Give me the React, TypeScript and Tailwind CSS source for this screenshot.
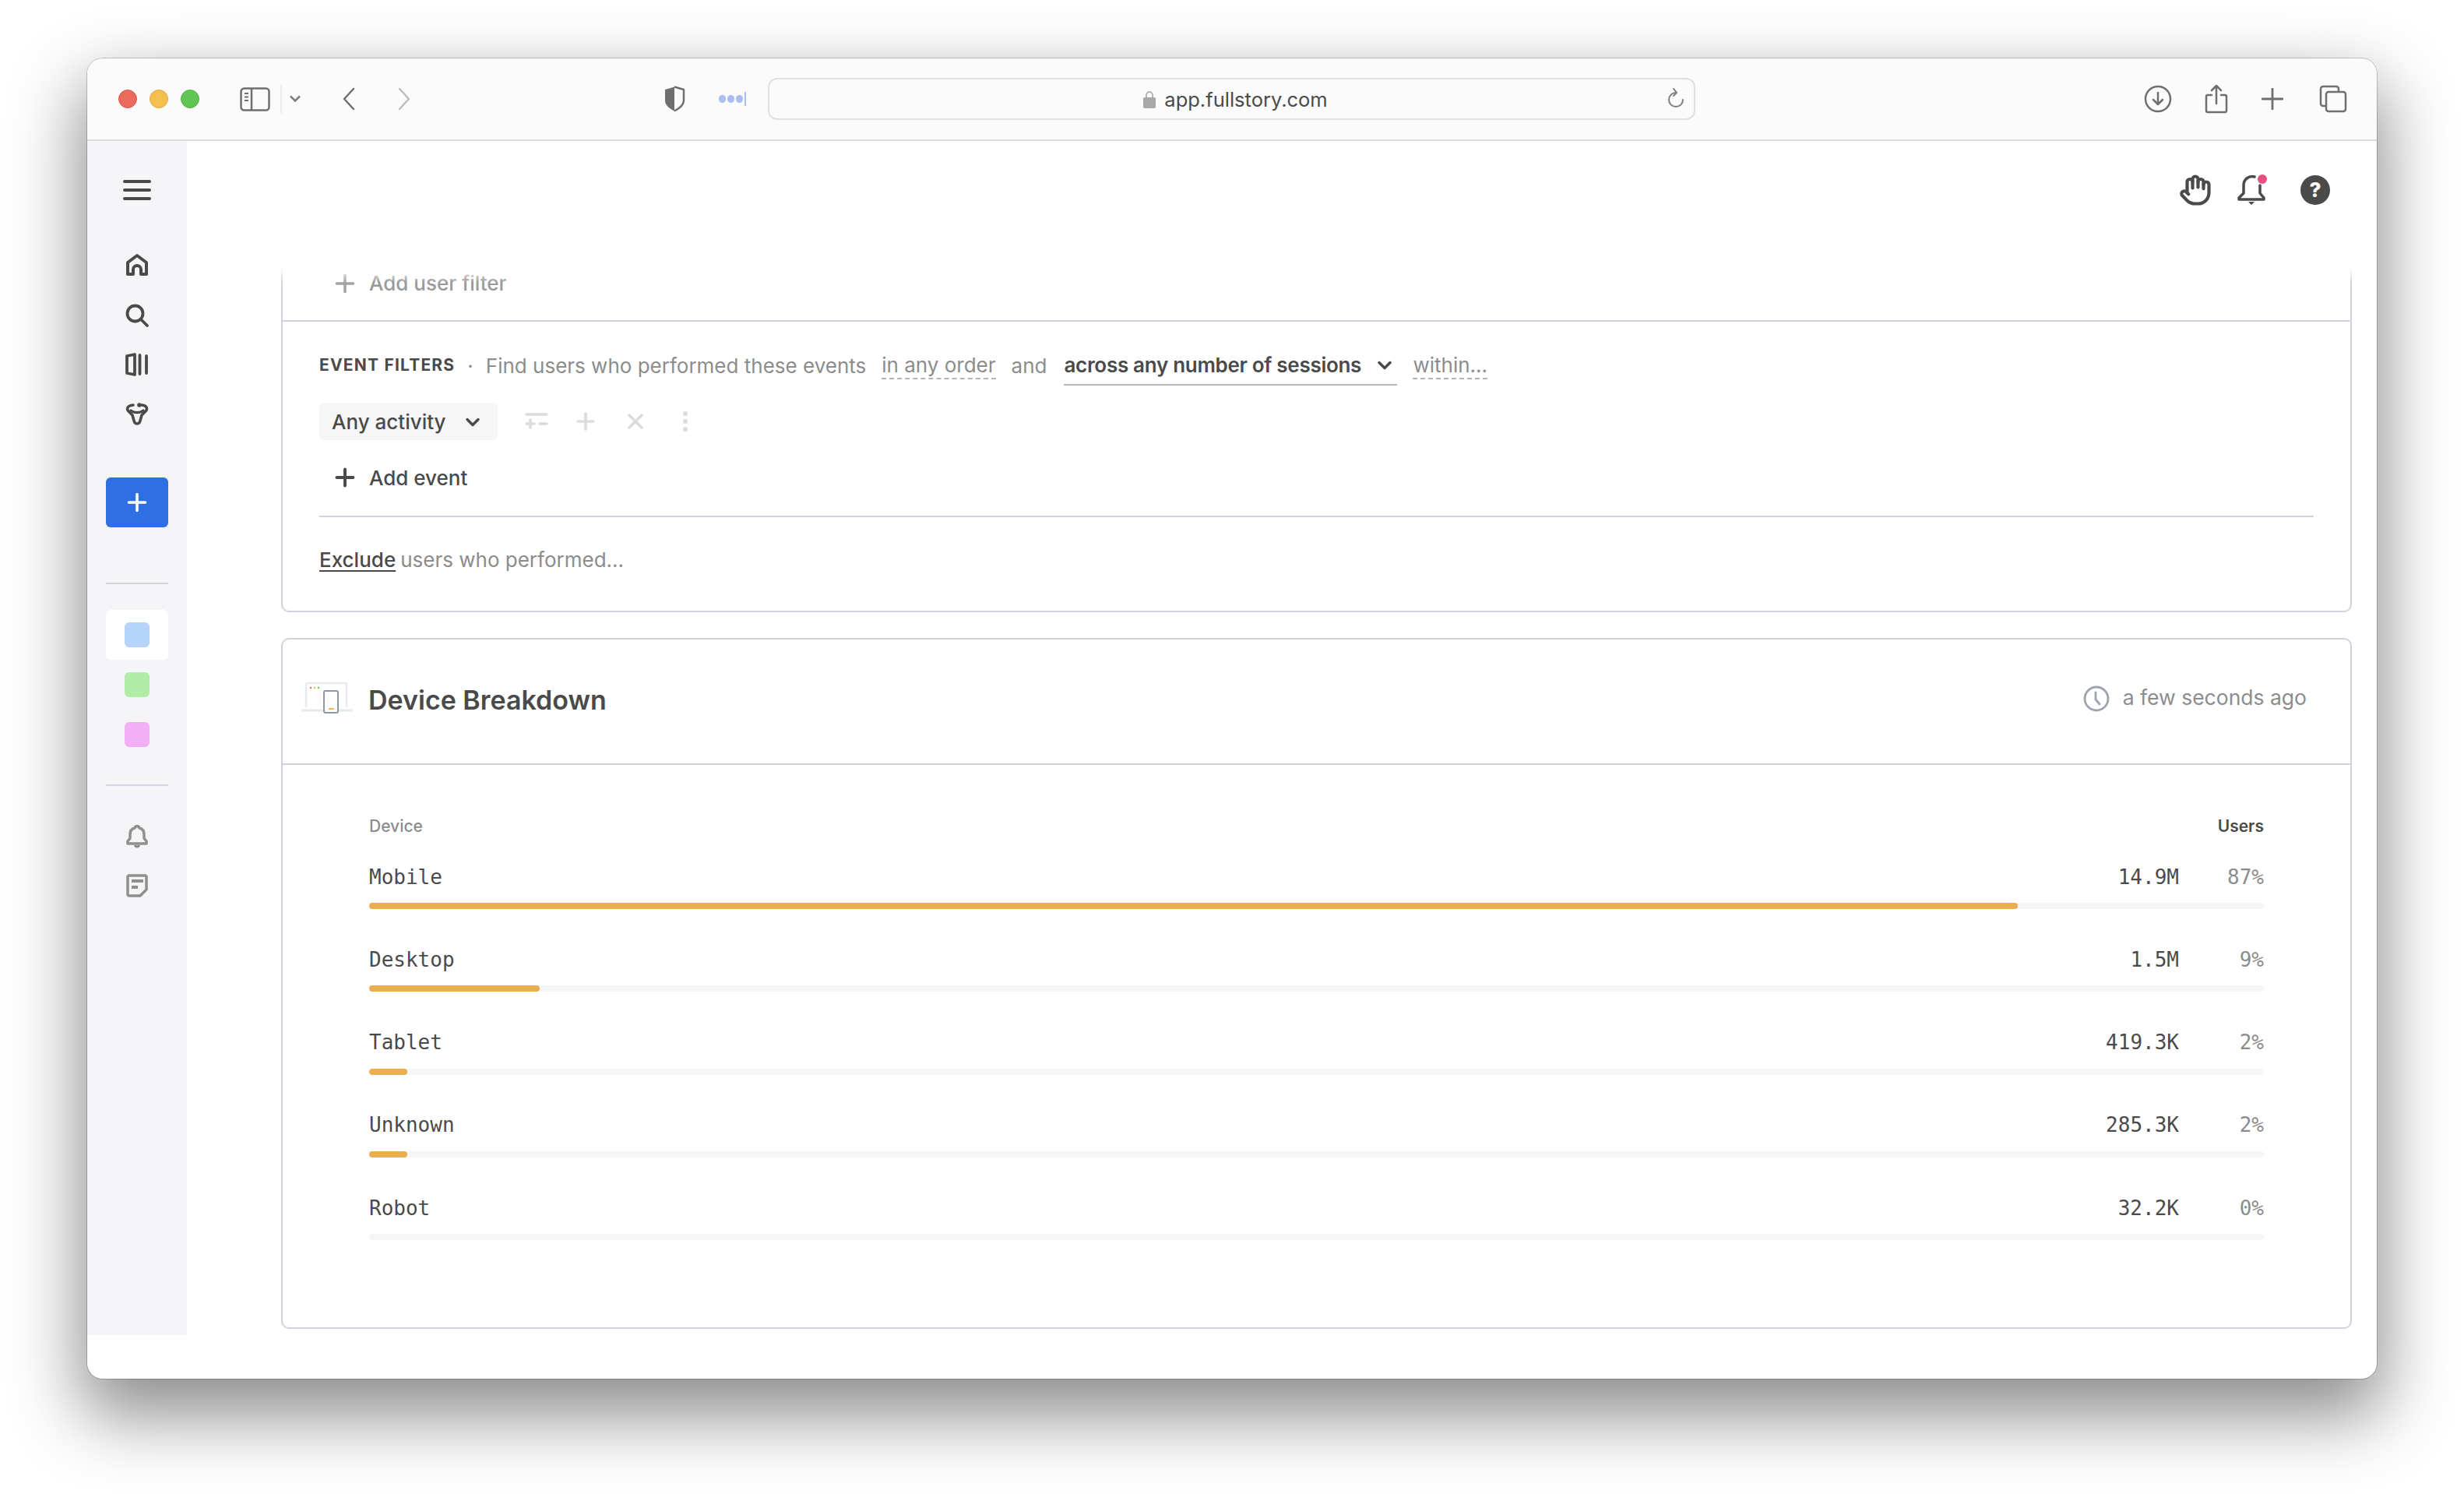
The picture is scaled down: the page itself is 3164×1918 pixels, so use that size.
import { ChevronDown, Hand, Plus, X } from "lucide-react";

const rows = [
  { name: "Mobile", value: "14.9M", pct: "87%", width: "87%" },
  { name: "Desktop", value: "1.5M", pct: "9%", width: "9%" },
  { name: "Tablet", value: "419.3K", pct: "2%", width: "2%" },
  { name: "Unknown", value: "285.3K", pct: "2%", width: "2%" },
  { name: "Robot", value: "32.2K", pct: "0%", width: "0%" },
];

const TitleBar = () => (
  <div className="h-[106px] shrink-0 bg-[#fbfbfb] border-b-2 border-[#dcdcdc] flex items-center pl-[40px] font-['Inter',sans-serif]">
    <div className="w-6 h-6 rounded-full bg-[#ec6a5e] border border-[#d85a4f]" />
    <div className="w-6 h-6 rounded-full bg-[#f4bf4f] border border-[#dea73f] ml-4" />
    <div className="w-6 h-6 rounded-full bg-[#61c554] border border-[#52b145] ml-4" />
    <svg className="ml-[52px]" width="39" height="31" viewBox="0 0 39 31" fill="none" stroke="#6f6f6f" strokeWidth="2.5">
      <rect x="1.5" y="1.5" width="36" height="28" rx="4" />
      <path d="M15 2v27" />
      <path d="M6 8h5M6 12.5h5M6 17h5" strokeWidth="2" />
    </svg>
    <div className="w-[2px] h-9 bg-[#ebebeb] ml-[13px]" />
    <svg className="ml-[10px]" width="14" height="10" viewBox="0 0 14 10" fill="none" stroke="#7d7d7d" strokeWidth="2.5">
      <path d="M1 1.5l6 6 6-6" />
    </svg>
    <svg className="ml-[54px]" width="16" height="30" viewBox="0 0 16 30" fill="none" stroke="#6f6f6f" strokeWidth="2.5" strokeLinecap="round" strokeLinejoin="round">
      <path d="M14 2L2 15l12 13" />
    </svg>
    <svg className="ml-[55px]" width="16" height="30" viewBox="0 0 16 30" fill="none" stroke="#bdbdbd" strokeWidth="2.5" strokeLinecap="round" strokeLinejoin="round">
      <path d="M2 2l12 13L2 28" />
    </svg>
    <svg className="ml-[325px]" width="28" height="34" viewBox="0 0 28 34" fill="none">
      <path d="M14 1.5L2 5v14c0 6 5 10 12 13.5V1.5z" fill="#6f6f6f" />
      <path d="M14 1.5L26 5v14c0 6-5 10-12 13.5" stroke="#6f6f6f" strokeWidth="2.5" strokeLinejoin="round" />
    </svg>
    <div className="ml-[43px] w-[37px] flex items-center gap-[2px]">
      <div className="w-[9px] h-[10px] rounded-full bg-[#a9bdf0]" />
      <div className="w-[9px] h-[10px] rounded-full bg-[#a9bdf0]" />
      <div className="w-[9px] h-[10px] rounded-full bg-[#a9bdf0]" />
      <div className="w-[2px] h-[18px] bg-[#a9bdf0]" />
    </div>
    <div className="ml-[26px] w-[1191px] h-[54px] border-2 border-[#e0e0e0] rounded-[12px] flex items-center justify-center relative">
      <svg className="mr-[11px] mb-[1px] ml-[10px]" width="16" height="24" viewBox="0 0 16 24" fill="none">
        <path d="M4 11V7a4 4 0 018 0v4" stroke="#b4b4b4" strokeWidth="2" />
        <rect x="0" y="10" width="16" height="14" rx="2" fill="#a8a8a8" />
      </svg>
      <span className="text-[25.5px] leading-none text-[#4a4a4a] pt-[2px]">app.fullstory.com</span>
      <svg className="absolute right-[11px] top-[11px]" width="24" height="28" viewBox="0 0 24 28" fill="none" stroke="#7d7d7d" strokeWidth="2" strokeLinecap="round">
        <path d="M12 6a9 9 0 109 9" />
        <path d="M9 1l4 5-4 4" />
      </svg>
    </div>
    <svg className="ml-[576px]" width="36" height="36" viewBox="0 0 36 36" fill="none" stroke="#6f6f6f" strokeWidth="2.5" strokeLinecap="round" strokeLinejoin="round">
      <circle cx="18" cy="18" r="16" />
      <path d="M18 10v15M12 19l6 6 6-6" />
    </svg>
    <svg className="ml-[42px]" width="30" height="38" viewBox="0 0 30 38" fill="none" stroke="#6f6f6f" strokeWidth="2.5" strokeLinecap="round" strokeLinejoin="round">
      <path d="M9 14H4a2 2 0 00-2 2v18a2 2 0 002 2h22a2 2 0 002-2V16a2 2 0 00-2-2h-5" />
      <path d="M15 25V2M9 8l6-6 6 6" />
    </svg>
    <svg className="ml-[43px]" width="28" height="28" viewBox="0 0 28 28" fill="none" stroke="#6f6f6f" strokeWidth="2.8" strokeLinecap="round">
      <path d="M14 1v26M1 14h26" />
    </svg>
    <svg className="ml-[46px]" width="36" height="36" viewBox="0 0 36 36" fill="none" stroke="#6f6f6f" strokeWidth="2.5" strokeLinejoin="round">
      <path d="M8 27H5a3 3 0 01-3-3V5a3 3 0 013-3h17a3 3 0 013 3v4" />
      <rect x="9" y="9" width="25" height="25" rx="3" />
    </svg>
  </div>
);

const Sidebar = () => (
  <div className="w-[128px] h-[1533px] shrink-0 bg-[#f5f5f8] flex flex-col items-center pt-[50px]">
    <div className="w-9 flex flex-col gap-[7px]">
      <div className="h-[4px] rounded-full bg-[#4a4a4a]" />
      <div className="h-[4px] rounded-full bg-[#4a4a4a]" />
      <div className="h-[4px] rounded-full bg-[#4a4a4a]" />
    </div>
    <svg className="mt-[68px]" width="30" height="30" viewBox="0 0 30 30" fill="none" stroke="#4a4a4a" strokeWidth="4" strokeLinejoin="round">
      <path d="M3 12L15 3l12 9v15h-7v-6a5 5 0 00-10 0v6H3z" />
    </svg>
    <svg className="mt-[35px]" width="30" height="30" viewBox="0 0 30 30" fill="none" stroke="#4a4a4a" strokeWidth="3.8" strokeLinecap="round">
      <circle cx="12.500" cy="12.500" r="10" />
      <path d="M20 20l8 8" />
    </svg>
    <svg className="mt-[33px]" width="30" height="30" viewBox="0 0 30 30" fill="none" stroke="#4a4a4a" strokeWidth="3.8" strokeLinecap="round" strokeLinejoin="round">
      <path d="M2 4l10-2v26L2 26z" />
      <path d="M18.500 3v24M27 4v22" />
    </svg>
    <svg className="mt-[34px]" width="30" height="30" viewBox="0 0 30 30" fill="none">
      <path d="M10 3C5 3.500 2.500 5 2.500 8c0 3 5 5.500 6.500 8l2 7c.5 2.500 1.500 4 4 4s3.500-1.500 4-4l2-7c1.500-2.500 6.500-5 6.500-8 0-3-2.500-4.500-6-5" stroke="#4a4a4a" strokeWidth="3.6" strokeLinecap="round" strokeLinejoin="round" />
      <path d="M7 10c4 3.500 12 3.500 16 0" stroke="#4a4a4a" strokeWidth="3.2" strokeLinecap="round" />
      <circle cx="18" cy="3" r="2.800" fill="#4a4a4a" />
    </svg>
    <button className="mt-[66px] w-20 h-16 rounded-[6px] bg-[#2f6fe4] flex items-center justify-center">
      <Plus size={36} color="#ffffff" strokeWidth={2.4} />
    </button>
    <div className="mt-[71px] w-20 h-[2px] bg-[#d2d1df]" />
    <div className="mt-[33px] w-20 h-16 rounded-[6px] bg-white flex items-center justify-center">
      <div className="w-8 h-8 rounded-[6px] bg-[#b6d3fb]" />
    </div>
    <div className="mt-4 w-8 h-8 rounded-[6px] bg-[#b2eda8]" />
    <div className="mt-8 w-8 h-8 rounded-[6px] bg-[#f3aef8]" />
    <div className="mt-[48px] w-20 h-[2px] bg-[#d2d1df]" />
    <svg className="mt-[50px]" width="28" height="30" viewBox="0 0 28 30" fill="none">
      <path d="M14 1.500c1.500 0 2.500 1 2.700 2.300C21 5 23 8 23 12v5l3 4v3H2v-3l3-4v-5c0-4 2-7 6.300-8.200C11.500 2.500 12.500 1.500 14 1.500z" stroke="#8f8f8f" strokeWidth="3.500" strokeLinejoin="round" />
      <path d="M10 26h8c0 2-2 3.500-4 3.500S10 28 10 26z" fill="#8f8f8f" />
    </svg>
    <svg className="mt-[33px]" width="28" height="30" viewBox="0 0 28 30" fill="none">
      <path d="M2 4a2 2 0 012-2h20a2 2 0 012 2v16l-8 8H4a2 2 0 01-2-2z" stroke="#8f8f8f" strokeWidth="3.500" strokeLinejoin="round" />
      <path d="M7 9h15M7 17h8" stroke="#8f8f8f" strokeWidth="4" />
    </svg>
  </div>
);

const FiltersCard = () => (
  <div className="relative h-[443px] border-x-2 border-b-2 border-[#d2d1df] rounded-b-[10px] font-['Inter',sans-serif] text-[26px]">
    <div className="absolute -left-[2px] -right-[2px] top-0 h-5 bg-gradient-to-b from-white to-transparent" />
    <div className="h-[70px] border-b-2 border-[#d2d1df] flex items-start pl-[62px] pt-[3px] text-[#999999] font-medium">
      <Plus size={36} color="#a4a4a4" strokeWidth={2.4} />
      <span className="ml-[13px] leading-[36px]">Add user filter</span>
    </div>
    <div className="px-[47px]">
      <div className="mt-[40px] h-8 flex items-center text-[#8c8c8c] whitespace-nowrap">
        <span className="text-[21px] font-bold tracking-[1.2px] text-[#4a4a4a]">EVENT FILTERS</span>
        <span className="ml-[16px] text-[#8c8c8c]">·</span>
        <span className="ml-[16px]">Find users who performed these events</span>
        <span className="ml-[20px] h-[36px] leading-[36px] border-b-2 border-dashed border-[#b5b5b5]">in any order</span>
        <span className="ml-[20px]">and</span>
        <span className="ml-[22px] w-[428px] h-[42px] flex items-center border-b-2 border-[#b5b5b5] mt-[9px] pb-[8px] text-[#4a4a4a] font-semibold tracking-[-0.3px]">
          across any number of sessions
          <ChevronDown className="ml-auto mr-[2px]" size={28} color="#4a4a4a" strokeWidth={3} />
        </span>
        <span className="ml-[20px] h-[36px] leading-[36px] border-b-2 border-dashed border-[#b5b5b5]">within...</span>
      </div>
      <div className="mt-[32px] flex items-center">
        <div className="w-[229px] h-12 rounded-[6px] bg-[#f6f6f6] flex items-center pl-4 pt-[1px] text-[#4a4a4a] font-medium">
          Any activity
          <ChevronDown className="ml-auto mr-[18px]" size={28} color="#4a4a4a" strokeWidth={3} />
        </div>
        <svg className="ml-[35px]" width="30" height="30" viewBox="0 0 30 30" fill="none" stroke="#dcdcdc" strokeWidth="3.500" strokeLinecap="round">
          <path d="M2 6h26M2 18h10M7 13v10M19 18h9" />
        </svg>
        <Plus className="ml-[31px]" size={34} color="#dcdcdc" strokeWidth={2.6} />
        <X className="ml-[31px]" size={32} color="#dcdcdc" strokeWidth={2.8} />
        <div className="ml-[45px] flex flex-col gap-[4px]">
          <div className="w-[6px] h-[6px] rounded-full bg-[#dcdcdc]" />
          <div className="w-[6px] h-[6px] rounded-full bg-[#dcdcdc]" />
          <div className="w-[6px] h-[6px] rounded-full bg-[#dcdcdc]" />
        </div>
      </div>
      <div className="mt-[32px] h-8 flex items-center pl-[15px] text-[#4a4a4a] font-medium">
        <Plus size={36} color="#4a4a4a" strokeWidth={2.6} />
        <span className="ml-[13px]">Add event</span>
      </div>
      <div className="mt-[33px] h-[2px] bg-[#d2d1df]" />
      <div className="mt-[38px] h-8 flex items-center text-[#8c8c8c]">
        <span className="text-[#4a4a4a] font-medium underline underline-offset-4">Exclude</span>
        <span className="ml-[6px]">users who performed...</span>
      </div>
    </div>
  </div>
);

const DeviceCard = () => (
  <div className="mt-[33px] h-[887px] border-2 border-[#d2d1df] rounded-[10px]">
    <div className="h-[161px] border-b-2 border-[#d2d1df] flex items-center pl-[24px] pr-[56px] font-['Inter',sans-serif]">
      <svg className="mb-[10px]" width="66" height="40" viewBox="0 0 66 40" fill="none">
        <path d="M6 32V3a2 2 0 012-2h48a2 2 0 012 2v29" stroke="#e7ebef" strokeWidth="2.500" />
        <path d="M0 36h66" stroke="#e7ebef" strokeWidth="3" />
        <circle cx="12" cy="7" r="1.200" fill="#ec6a5e" />
        <circle cx="17" cy="7" r="1.200" fill="#f4bf4f" />
        <circle cx="22" cy="7" r="1.200" fill="#61c554" />
        <rect x="29" y="11" width="18" height="28" rx="2" fill="#ffffff" stroke="#8d9aa6" strokeWidth="2" />
        <rect x="35" y="33" width="7" height="2" rx="1" fill="#ecb04e" />
      </svg>
      <h2 className="ml-[20px] mb-[4px] text-[34px] font-semibold text-[#4a4a4a]">Device Breakdown</h2>
      <svg className="ml-auto mb-[8px]" width="34" height="34" viewBox="0 0 34 34" fill="none" stroke="#9aa5af" strokeWidth="2.800" strokeLinecap="round">
        <circle cx="17" cy="17" r="15" />
        <path d="M16 9v9l5 6" />
      </svg>
      <span className="ml-[17px] mb-[9px] text-[26.500px] text-[#8c8c8c]">a few seconds ago</span>
    </div>
    <div className="pl-[111px] pr-[111px] pt-[65px]">
      <div className="h-7 flex items-center justify-between font-['Inter',sans-serif] text-[21px]">
        <span className="text-[#8c8c8c] font-medium">Device</span>
        <span className="text-[#4a4a4a] font-semibold">Users</span>
      </div>
      <div className="mt-[34px]">
        {rows.map((row) => (
          <div key={row.name} className="h-[106.25px] font-['DejaVu_Sans_Mono',monospace] text-[26px]">
            <div className="h-8 flex items-center text-[#4a4a4a] pt-[2px]">
              <span>{row.name}</span>
              <span className="ml-auto mr-[4px]">{row.value}</span>
              <span className="w-[105px] text-right text-[#8c8c8c]">{row.pct}</span>
            </div>
            <div className="mt-[18px] h-2 rounded-full bg-[#f6f6f6]">
              <div className="h-2 rounded-full bg-[#eaae50]" style={{ width: row.width }} />
            </div>
          </div>
        ))}
      </div>
    </div>
  </div>
);

const App = () => {
  return (
    <div className="w-[3164px] h-[1918px] bg-white pt-[75px] pl-[112px] overflow-hidden">
      <div className="w-[2940px] h-[1695px] rounded-[20px] bg-white overflow-hidden flex flex-col shadow-[0_40px_90px_8px_rgba(0,0,0,0.45),0_0_0_1px_rgba(0,0,0,0.2)]">
        <TitleBar />
        <div className="flex flex-1">
          <Sidebar />
          <div className="flex-1 pl-[121px] pr-[32px]">
            <div className="h-[162px] flex justify-end items-start pt-[42px] pr-[28px]">
              <Hand className="mr-[30px]" size={42} color="#4a4a4a" strokeWidth={2.4} />
              <div className="relative mr-[42px] mt-[1px]">
                <svg width="42" height="40" viewBox="0 0 42 40" fill="none">
                  <path d="M25 3c-7-2-14 3-14 11v10l-6 6v2h32v-2l-5-6V14" stroke="#4a4a4a" strokeWidth="3.500" strokeLinecap="round" strokeLinejoin="round" />
                  <path d="M17 35h8l-4 4z" fill="#4a4a4a" />
                </svg>
                <div className="absolute right-[1px] top-0 w-3 h-3 rounded-full bg-[#e8507f]" />
              </div>
              <div className="w-[38px] h-[38px] mt-[2px] rounded-full bg-[#4a4a4a] text-white flex items-center justify-center font-['Inter',sans-serif] font-extrabold text-[26px] leading-none">?</div>
            </div>
            <FiltersCard />
            <DeviceCard />
          </div>
        </div>
      </div>
    </div>
  );
};

export default App;
